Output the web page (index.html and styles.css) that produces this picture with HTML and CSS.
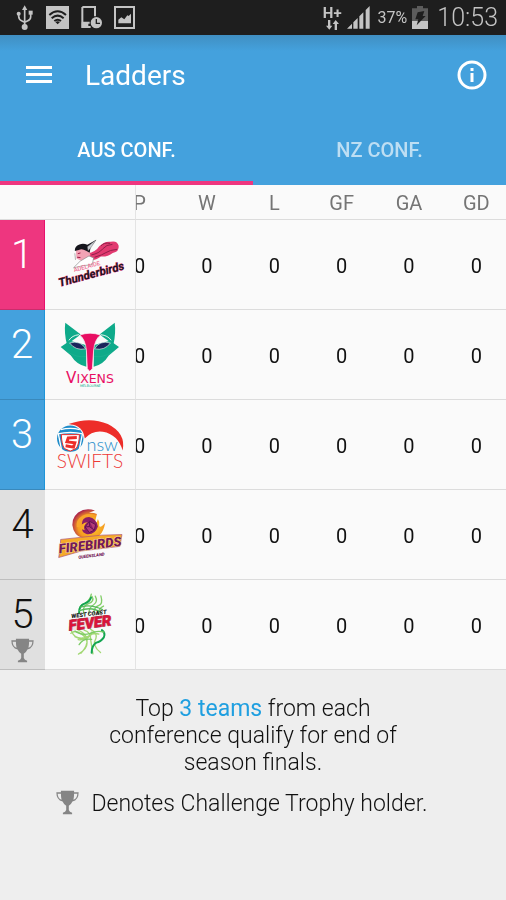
FILE: index.html
```html
<!DOCTYPE html>
<html lang="en">
<head>
    <meta charset="UTF-8">
    <meta name="viewport" content="width=device-width, initial-scale=1.0">
    <title>Ladders</title>
    <link rel="stylesheet" href="styles.css">
</head>
<body>
    <!-- Status bar -->
    <div class="status-bar">
        <div class="status-group status-left">
            <svg width="18" height="26" viewBox="0 0 54 78" fill="none" stroke="#c4c4c4" stroke-width="5">
                <path d="M26 12v52M8 24v10q0 10 10 14l8 4M44 22v14q0 8-10 12l-8 4"/>
                <path d="M26 1l8 14H18z" fill="#c4c4c4" stroke="none"/>
                <circle cx="26" cy="66" r="9" fill="#c4c4c4" stroke="none"/>
                <circle cx="8" cy="26" r="6" fill="#c4c4c4" stroke="none"/>
                <path d="M38 17h12v12H38z" fill="#c4c4c4" stroke="none"/>
            </svg>
            <svg width="23" height="23" viewBox="0 0 69 69">
                <path d="M0 0h69v69H0z" fill="#c4c4c4"/>
                <g fill="none" stroke="#1e1e1e" stroke-width="6">
                    <path d="M10 27q25-22 50 0M17 37q18-16 36 0M25 45q10-8 20 0"/>
                </g>
                <path d="M28 48q7-4 14 0l-7 7z" fill="#1e1e1e"/>
            </svg>
            <svg width="21" height="23" viewBox="0 0 63 69">
                <path d="M4 3h38v28M4 3v60h25M4 50h22" fill="none" stroke="#c4c4c4" stroke-width="6"/>
                <path d="M2 49h20v16H2z" fill="#c4c4c4"/>
                <circle cx="46" cy="50" r="17" fill="#c4c4c4"/>
                <path d="M46 39v13h11" fill="none" stroke="#1e1e1e" stroke-width="4"/>
            </svg>
            <svg width="21" height="23" viewBox="0 0 63 69">
                <path d="M3 3h57v63H3z" fill="none" stroke="#c4c4c4" stroke-width="6"/>
                <path d="M13 52V41l9-7 9 6 9-12 4 2 7-7v29z" fill="#c4c4c4"/>
            </svg>
        </div>
        <div class="status-group status-right">
            <div class="network">
                <span>H+</span>
                <svg width="13" height="10" viewBox="0 0 39 30" fill="#c4c4c4">
                    <path d="M6 0h7v17h6L10 29 0 17h6zM26 30h7V12h6L29 0 20 12h6z"/>
                </svg>
            </div>
            <svg class="signal" width="23" height="23" viewBox="0 0 69 69" fill="#c4c4c4">
                <path d="M0 68l15-15v15zM19 49l13-13v32H19zM37 31l12-12v49H37zM56 12L68 0v68H56z"/>
            </svg>
            <span class="battery-level">37%</span>
            <svg class="battery" width="16" height="24" viewBox="0 0 48 72">
                <path d="M15 0h18v7h15v38H0V7h15z" fill="#5c5c5c"/>
                <path d="M0 45h48v24H0z" fill="#c4c4c4"/>
                <path d="M17 19l20-4-5 15h9L14 58l5-18h-9z" fill="#1e1e1e"/>
            </svg>
            <time class="clock">10:53</time>
        </div>
    </div>

    <header class="app-header">
        <div class="toolbar">
            <button class="icon-btn" type="button" aria-label="Menu">
                <svg width="26" height="18" viewBox="0 0 26 18" fill="#fff">
                    <path d="M0 0h26v3H0zM0 7h26v3H0zM0 14h26v3H0z"/>
                </svg>
            </button>
            <h1>Ladders</h1>
            <button class="icon-btn" type="button" aria-label="Information">
                <svg width="30" height="30" viewBox="0 0 30 30">
                    <circle cx="15" cy="15" r="13" fill="none" stroke="#fff" stroke-width="3"/>
                    <path d="M13.500 8h3v3h-3zM13.500 13h3v9h-3z" fill="#fff"/>
                </svg>
            </button>
        </div>
        <nav class="tabs">
            <button class="tab active" type="button">AUS CONF.</button>
            <button class="tab" type="button">NZ CONF.</button>
        </nav>
    </header>

    <!-- Ladder, the stats scroll under the rank and logo columns -->
    <main>
        <div class="ladder-scroll" id="ladderScroll">
            <table class="ladder">
                <colgroup>
                    <col class="col-rank">
                    <col class="col-team">
                    <col span="6">
                </colgroup>
                <thead>
                    <tr>
                        <td class="corner" colspan="2"></td>
                        <th scope="col">P</th>
                        <th scope="col">W</th>
                        <th scope="col">L</th>
                        <th scope="col">GF</th>
                        <th scope="col">GA</th>
                        <th scope="col">GD</th>
                    </tr>
                </thead>
                <tbody>
                    <tr>
                        <td class="rank challenge">1</td>
                        <th class="team" scope="row">
                            <svg viewBox="135 15 270 270" role="img" aria-label="Adelaide Thunderbirds">
                                <path d="M262 117q26-5 36-22 14-16 34-14 20-5 25 12 2 18-18 22-14 12-36 11-14 12-34 11z" fill="#e23a70"/>
                                <path d="M274 121q24-5 34-18 12-14 30-14M284 128q24-7 34-14 12-8 34-10M303 94q10-12 28-8" fill="none" stroke="#8e1f48" stroke-width="3"/>
                                <path d="M227 108l14-12 25 6 5 20-24 18-18-8z" fill="#f2a3b5"/>
                                <path d="M224 109q-1-15 14-20 12-4 24 1l27-15-17 22-3 17-11-6q-13-8-22-2z" fill="#15151c"/>
                                <path d="M262 96l26-20-16 24-8 8z" fill="#c9ccd2" stroke="#555" stroke-width="1"/>
                                <path d="M233 117l8-2M231 128l10 1" stroke="#a01846" stroke-width="3"/>
                                <path d="M224 116l2 20M220 160l20-20 27-16 14 6-4 20-30 4z" fill="#fff" stroke="#888" stroke-width="2"/>
                                <g transform="rotate(-15 270 170)">
                                    <text x="223" y="160" font-size="18" font-weight="500" fill="#ee6c91">ADELAIDE</text>
                                    <text x="169" y="192" font-size="35" font-weight="700" font-style="italic" fill="#1c1420" stroke="#ee3d80" stroke-width="2" paint-order="stroke">Thunderbirds</text>
                                </g>
                            </svg>
                        </th>
                        <td>0</td><td>0</td><td>0</td><td>0</td><td>0</td><td>0</td>
                    </tr>
                    <tr>
                        <td class="rank finals">2</td>
                        <th class="team" scope="row">
                            <svg viewBox="135 15 270 270" role="img" aria-label="Melbourne Vixens">
                                <path d="M195 54l47 35-42 31q-9-34-5-66zM345 54l-46 35 42 31q8-34 4-66z" fill="#0eaa8a"/>
                                <path d="M181 127l28-19 49 13 1 66q-30-6-47-34zM358 127l-27-19-49 13-1 66q29-6 46-34z" fill="#0eaa8a"/>
                                <path d="M206 107q10-15 30-17 15 12 20 32M334 107q-10-15-31-17-14 12-20 32" fill="none" stroke="#e5f5ef" stroke-width="3"/>
                                <path d="M239 91q31-11 63 0-18 14-21 46l-4 56-8 8-7-8-3-56q-3-32-20-46z" fill="#e80e63" stroke="#fafafa" stroke-width="2"/>
                                <path d="M208 115q34-9 49 18-31 6-49-18zM332 115q-34-9-48 18 31 6 48-18z" fill="#1b245b" stroke="#e5f5ef" stroke-width="2"/>
                                <path d="M204 143q25 17 54 13M336 143q-25 17-54 13" fill="none" stroke="#32b899" stroke-width="1"/>
                                <text class="logo-wide" x="270" y="237" font-size="46" fill="#e80e63" text-anchor="middle">V<tspan font-size="38">IXENS</tspan></text>
                                <text class="logo-wide" x="271" y="250" font-size="10" fill="#0eaa8a" text-anchor="middle">MELBOURNE</text>
                            </svg>
                        </th>
                        <td>0</td><td>0</td><td>0</td><td>0</td><td>0</td><td>0</td>
                    </tr>
                    <tr>
                        <td class="rank finals">3</td>
                        <th class="team" scope="row">
                            <svg viewBox="135 15 270 270" role="img" aria-label="NSW Swifts">
                                <path d="M205 88q65-23 119 0 56 28 45 80-14-49-60-57-33-4-55 21-9-32-49-44z" fill="#ed2d29"/>
                                <circle cx="210" cy="132" r="43" fill="#fafafa"/>
                                <circle cx="210" cy="132" r="40" fill="#1d8bc9"/>
                                <path d="M181 105q30-8 58 0M172 118q38-9 76 0" fill="none" stroke="#fff" stroke-width="4"/>
                                <path d="M174 118l9 45M247 118l-9 45" stroke="#fff" stroke-width="4"/>
                                <path d="M183 120h55q-1 30-10 42l-18 8-18-8q-8-13-9-42z" fill="#fff" stroke="#ed2d29" stroke-width="3"/>
                                <path d="M230 129l-26 1-4 12 24 3-4 13-24-4" fill="none" stroke="#ed2d29" stroke-width="9"/>
                                <text class="logo-round" x="307" y="171" font-size="55" fill="#268fca" text-anchor="middle">nsw</text>
                                <text class="logo-round" x="270" y="221" font-size="58" fill="#ed3936" text-anchor="middle">SWIFTS</text>
                            </svg>
                        </th>
                        <td>0</td><td>0</td><td>0</td><td>0</td><td>0</td><td>0</td>
                    </tr>
                    <tr>
                        <td class="rank">4</td>
                        <th class="team" scope="row">
                            <svg viewBox="135 15 270 270" role="img" aria-label="Queensland Firebirds">
                                <defs>
                                    <radialGradient id="flame" cx="58%" cy="60%" r="62%">
                                        <stop offset="0" stop-color="#ffd22e"/>
                                        <stop offset=".65" stop-color="#f59a20"/>
                                        <stop offset="1" stop-color="#a9204d"/>
                                    </radialGradient>
                                </defs>
                                <path d="M291 88q-10-5-24-4l18-7q-28-10-51 6-26 22-14 53 12 28 45 26 42 4 51-47-13 15-18 10 3-12-4-22-2 11-10 14z" fill="url(#flame)"/>
                                <path d="M230 127q-4-22 18-35 23-9 43 1-23-3-36 12-8 10-6 25z" fill="#f9a52a"/>
                                <path d="M245 120q0-22 22-23 22 3 27 29-8 25-33 23-15-5-15-15l8 3q-7-14 9-24-9 0-18 7z" fill="#8b1d65"/>
                                <path d="M255 127l14-17 18 10-4 17-15 7zM269 111l-1 15 14 10M256 127l12-1" fill="#b43c78" stroke="#5d1453" stroke-width="3"/>
                                <path d="M181 165l124-13 62-2-6 36-117 14-69 20 4-26z" fill="#f5aa29" stroke="#a8507a" stroke-width="2"/>
                                <g transform="rotate(-7 270 180)">
                                    <text class="logo-block" x="270" y="196" font-size="40" fill="#741956" stroke="#fbd9a0" stroke-width="3" paint-order="stroke" text-anchor="middle">FIREBIRDS</text>
                                    <text class="logo-block" x="270" y="219" font-size="13" fill="#741956" text-anchor="middle">QUEENSLAND</text>
                                </g>
                            </svg>
                        </th>
                        <td>0</td><td>0</td><td>0</td><td>0</td><td>0</td><td>0</td>
                    </tr>
                    <tr>
                        <td class="rank">5
                            <svg class="trophy" viewBox="0 0 70 74" role="img" aria-label="Challenge Trophy holder">
                                <path d="M15 1h40v5h14q0 24-19 28-4 9-11 13v13q2 6 10 8v5H21v-5q8-2 10-8V47q-7-4-11-13Q1 30 1 6h14zM5 10q1 15 12 19-2-9-2-19zM65 10H55q0 10-2 19 11-4 12-19z" fill="#858585" fill-rule="evenodd"/>
                            </svg>
                        </td>
                        <th class="team" scope="row">
                            <svg viewBox="135 15 270 270" role="img" aria-label="West Coast Fever">
                                <g fill="none" stroke-linecap="round">
                                    <path d="M238 115q-4-22 16-29 16-8 20-28M251 118q-5-24 14-31 20-8 11-22M267 117q-1-19 14-27 14-9 5-26M282 116q-1-18 15-24 13-5 6-29M296 117q-1-15 15-23" stroke="#82cd68" stroke-width="4"/>
                                    <path d="M237 115q-1-23 18-29 14-5 18-17" stroke="#12a551" stroke-width="6"/>
                                    <path d="M242 97q30-10 66 8M238 108q38-14 65 6" stroke="#57bb5b" stroke-width="4"/>
                                    <path d="M214 171q10 22 33 20 22-1 28-18M224 187q24 14 44-4 12-9 29-4M234 196q25 4 42-18M212 177q12-13 34 3 17 13 15 28 0 17-26 32M233 166q26 13 28 28 3 20-18 43M252 167q22 7 20 29 3 21 7 43M271 164q22 12 17 28-14 21 14 43" stroke="#a2d873" stroke-width="4"/>
                                    <path d="M306 167q12 9 6 22-9 13-23 16-14 9-14 31" stroke="#12a551" stroke-width="6"/>
                                    <path d="M224 170q20 15 47 7 21-10 41-4M237 211q12-20 38-16" stroke="#7bcb65" stroke-width="4"/>
                                </g>
                                <g transform="rotate(-7 270 145)" font-weight="900" font-style="italic" text-anchor="middle">
                                    <path d="M213 128h121l-6 33H206z" fill="#f7dfe2"/>
                                    <text x="270" y="124" font-size="18" fill="#222">WEST COAST</text>
                                    <text x="270" y="161" font-size="45" fill="#dc143a" stroke="#8d2438" stroke-width="2" paint-order="stroke">FEVER</text>
                                </g>
                            </svg>
                        </th>
                        <td>0</td><td>0</td><td>0</td><td>0</td><td>0</td><td>0</td>
                    </tr>
                </tbody>
            </table>
        </div>

        <div class="notes">
            <p class="qualify">Top <strong>3 teams</strong> from each conference qualify for end of season finals.</p>
            <p class="legend">
                <svg class="trophy" viewBox="0 0 70 74" aria-hidden="true">
                    <path d="M15 1h40v5h14q0 24-19 28-4 9-11 13v13q2 6 10 8v5H21v-5q8-2 10-8V47q-7-4-11-13Q1 30 1 6h14zM5 10q1 15 12 19-2-9-2-19zM65 10H55q0 10-2 19 11-4 12-19z" fill="#858585" fill-rule="evenodd"/>
                </svg>
                <span>Denotes Challenge Trophy holder.</span>
            </p>
        </div>
    </main>

    <script>
        // Open with the stats already scrolled past the first column's edge
        document.getElementById('ladderScroll').scrollLeft = 30;
    </script>
</body>
</html>
```

FILE: styles.css
```css
:root {
    --blue: #44a1dd;
    --pink: #ee367f;
    --page: #eeeeee;
    --surface: #fafafa;
    --line: #dcdcdc;
    --status: #1e1e1e;
    --status-icon: #c4c4c4;
}

* {
    margin: 0;
    padding: 0;
    box-sizing: border-box;
}

body {
    background: var(--page);
    color: #111;
    font-family: Roboto, sans-serif;
}

button {
    background: none;
    border: none;
    font-family: inherit;
    cursor: pointer;
}

svg {
    display: block;
    flex: none;
}

/* Status bar */
.status-bar {
    display: flex;
    justify-content: space-between;
    height: 35px;
    padding: 0 8px 0 16px;
    background: var(--status);
    color: var(--status-icon);
}

.status-group {
    display: flex;
    align-items: center;
}

.status-left {
    gap: 12px;
}

.status-right {
    gap: 5px;
}

.network {
    display: flex;
    flex-direction: column;
    align-items: center;
    font-size: 15px;
    font-weight: 700;
    line-height: 14px;
}

.battery-level {
    margin-left: 3px;
    font-size: 16px;
}

.clock {
    margin-left: 4px;
    font-size: 25px;
    font-weight: 300;
}

/* Header */
.app-header {
    background: linear-gradient(#408fc2, var(--blue) 16px);
    color: #fff;
}

.toolbar {
    display: flex;
    align-items: center;
    height: 80px;
    padding: 0 12px 0 18px;
}

.toolbar h1 {
    flex: 1;
    margin-left: 25px;
    font-size: 28px;
    font-weight: 400;
}

.icon-btn {
    padding: 8px;
}

.toolbar .icon-btn:last-child {
    padding: 7px;
}

.tabs {
    display: grid;
    grid-template-columns: 1fr 1fr;
}

.tab {
    height: 70px;
    padding-top: 4px;
    border-bottom: 4px solid transparent;
    color: rgba(255, 255, 255, 0.65);
    font-size: 20px;
    font-weight: 500;
}

.tab.active {
    border-bottom-color: var(--pink);
    color: #fff;
}

/* Ladder */
.ladder-scroll {
    overflow-x: auto;
    scrollbar-width: none;
    background: var(--surface);
}

.ladder {
    width: calc(100% + 34px);
    table-layout: fixed;
    border-collapse: separate;
    border-spacing: 0;
    text-align: center;
}

.col-rank {
    width: 45px;
}

.col-team {
    width: 91px;
}

.ladder th,
.ladder td {
    border-bottom: 1px solid var(--line);
    font-size: 20px;
    font-weight: 400;
}

.ladder thead th {
    height: 35px;
    padding-top: 2px;
    color: #757575;
}

.ladder tbody td {
    height: 90px;
    padding-top: 2px;
}

.ladder .corner,
.ladder .team {
    position: sticky;
    background: var(--surface);
    border-right: 1px solid #e4e4e4;
}

.ladder .corner {
    left: 0;
}

.ladder .team {
    left: 45px;
}

.team svg {
    width: 90px;
    height: 89px;
    font-family: Roboto, sans-serif;
}

.ladder tbody .rank {
    position: sticky;
    left: 0;
    padding-top: 11px;
    background: #e0e0e0;
    border-bottom-color: rgba(0, 0, 0, 0.15);
    font-size: 40px;
    font-weight: 300;
    line-height: 47px;
    vertical-align: top;
}

.ladder tbody .challenge {
    background: var(--pink);
    border-right: 1px solid #e8106c;
    color: #fff;
}

.ladder tbody .finals {
    background: var(--blue);
    border-right: 1px solid #1e94d8;
    color: #fff;
}

.trophy {
    width: 23px;
    height: 25px;
}

.rank .trophy {
    margin: 0 auto;
}

/* Team logo lettering */
.logo-wide {
    font-family: "DejaVu Sans", sans-serif;
}

.logo-round {
    font-family: Lato, sans-serif;
    font-weight: 300;
}

.logo-block {
    font-weight: 900;
    font-style: italic;
}

/* Notes */
.notes {
    display: flex;
    flex-direction: column;
    align-items: center;
    gap: 14px;
    padding: 25px 24px;
    font-size: 23px;
    font-weight: 300;
    line-height: 27px;
}

.qualify {
    max-width: 300px;
    text-align: center;
}

.qualify strong {
    color: #1f9fe0;
    font-weight: 400;
}

.legend {
    display: flex;
    gap: 12px;
    margin-right: 22px;
}
```
